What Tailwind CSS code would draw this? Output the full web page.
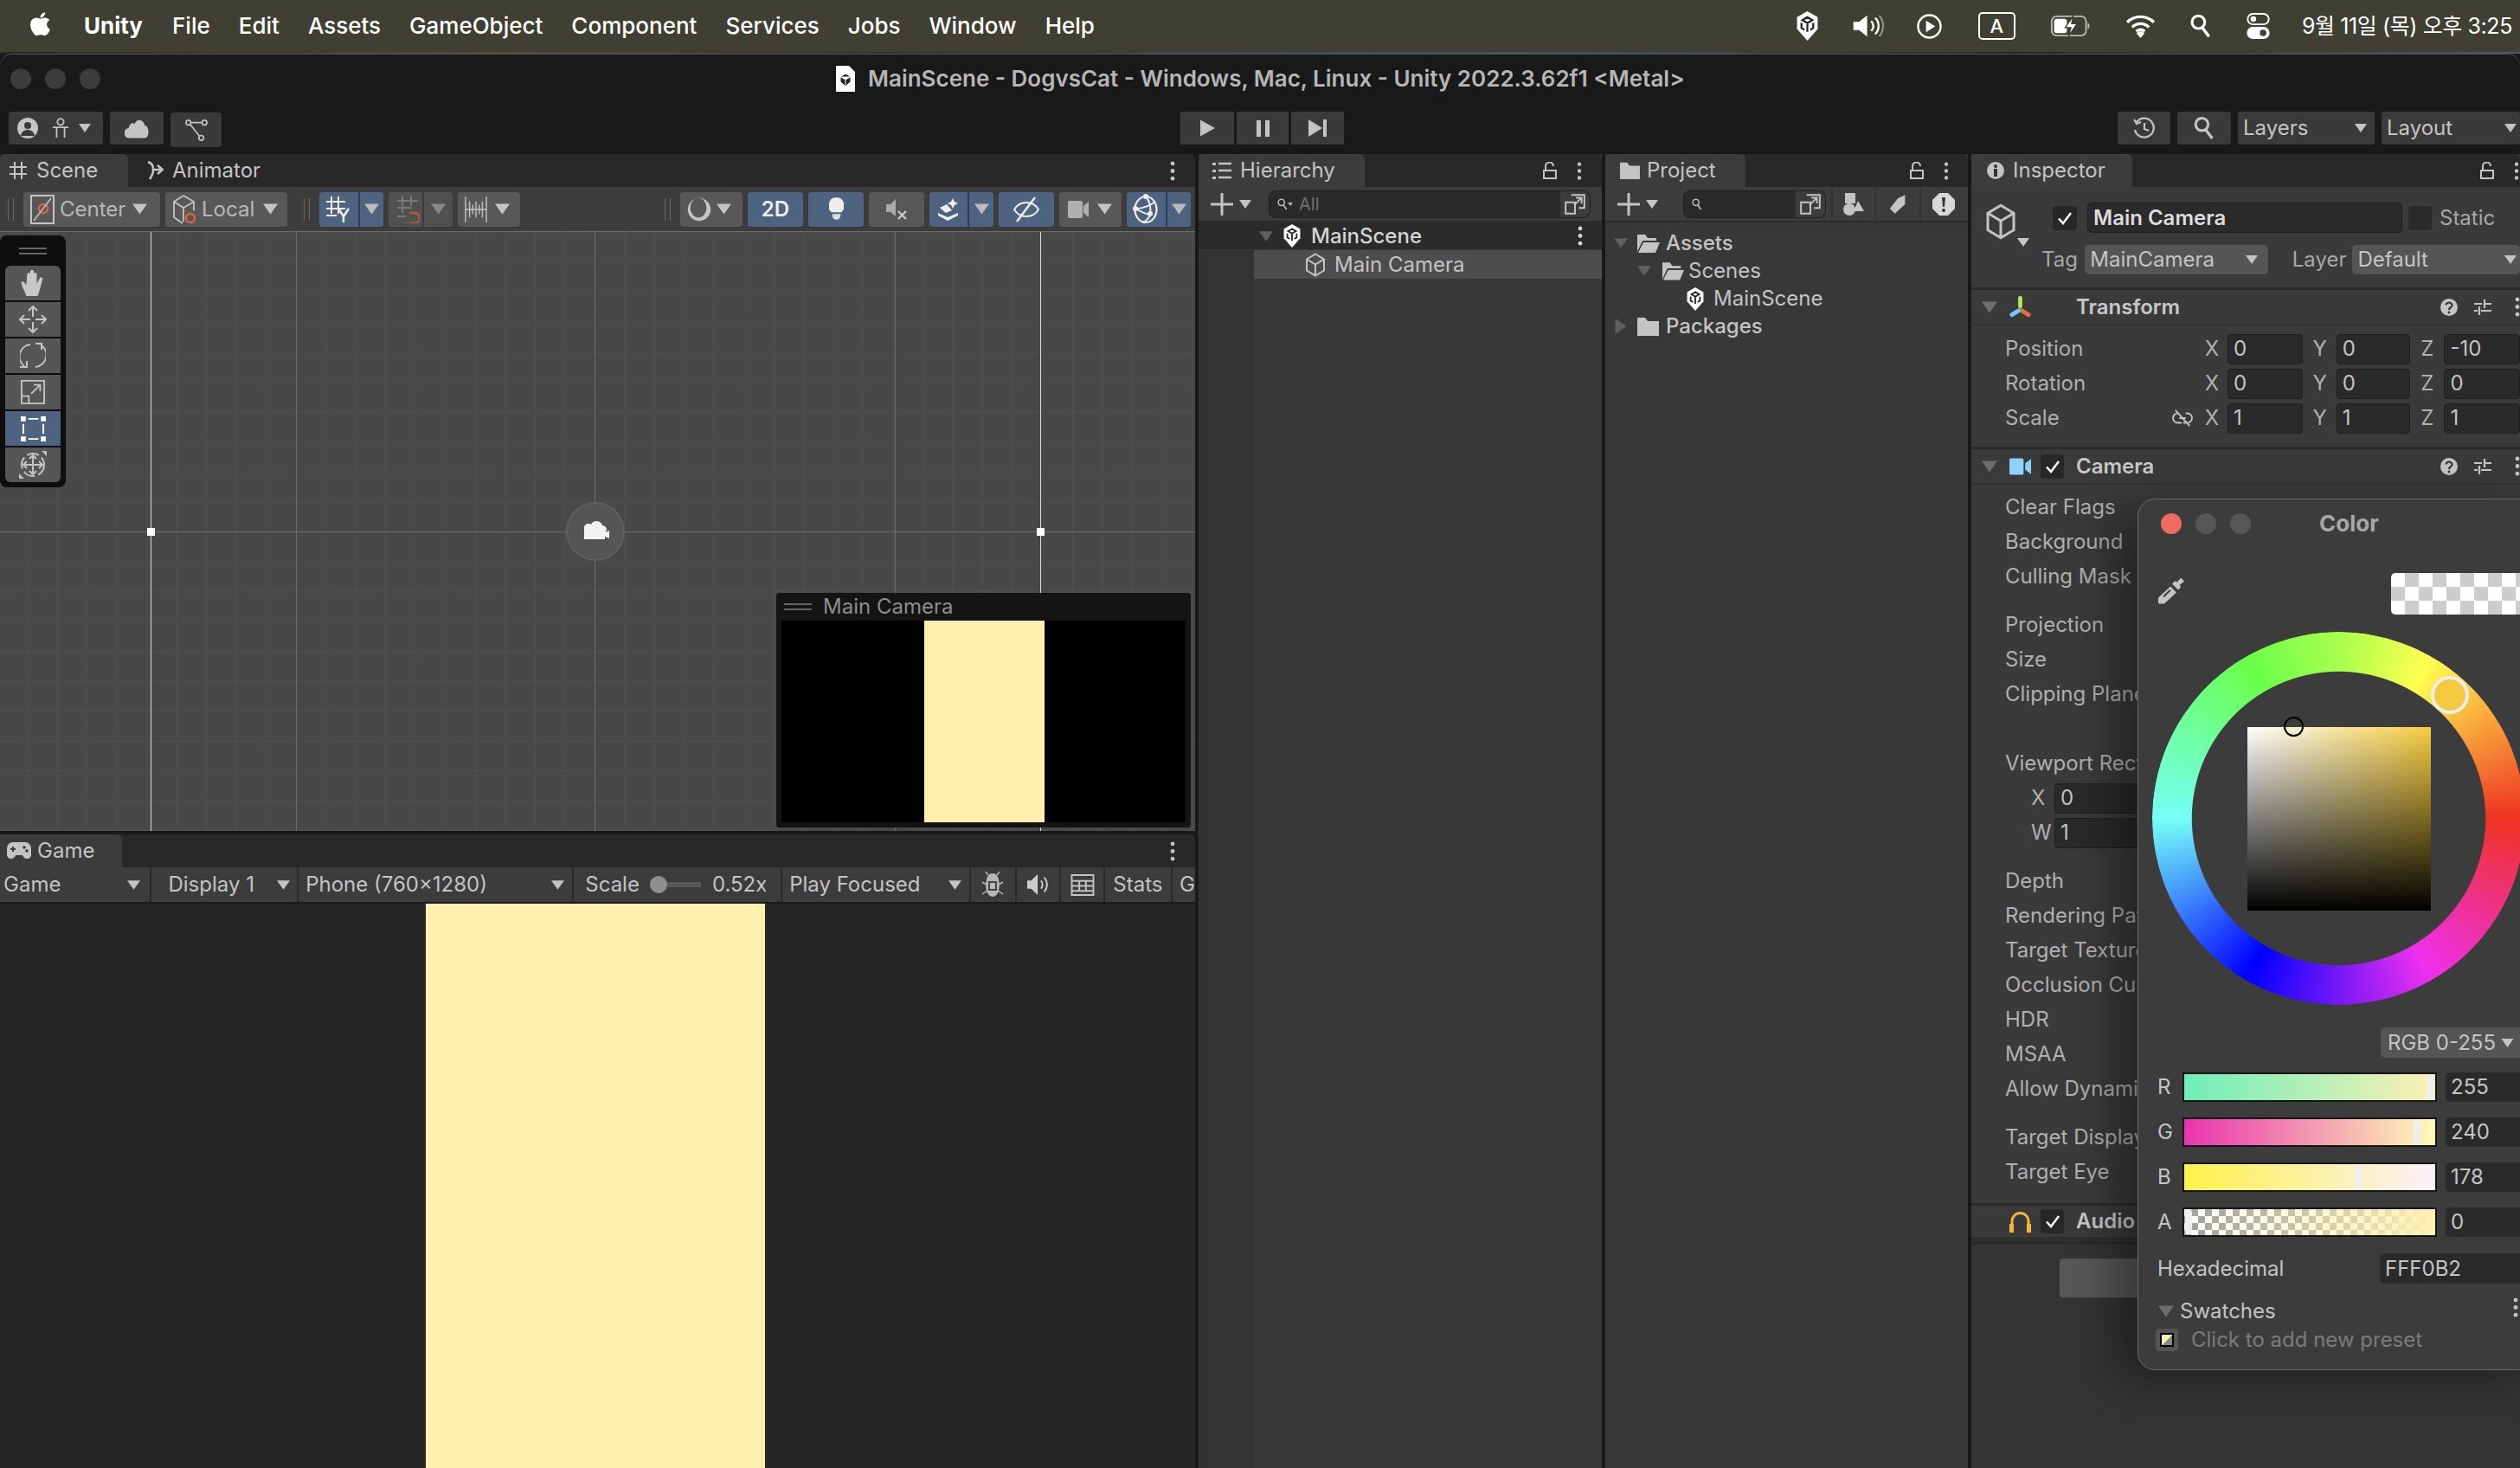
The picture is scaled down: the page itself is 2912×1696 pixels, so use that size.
<!DOCTYPE html>
<html lang="en">
<head>
  <meta charset="UTF-8" />
  <title>Unity</title>
  <script src="https://cdn.jsdelivr.net/npm/@tailwindcss/browser@4"></script>
</head>
<body class="relative w-[2912px] h-[1696px] overflow-hidden bg-[#191919] text-[#c4c4c4] text-[24px] leading-none [font-family:Inter,'Noto_Sans_CJK_KR',sans-serif]">
  <svg class="hidden">
    <symbol id="tri" viewBox="0 0 14 10"><path d="M0 0h14L7 10z" fill="currentColor"/></symbol>
    <symbol id="tri-r" viewBox="0 0 10 14"><path d="M0 0v14l10-7z" fill="currentColor"/></symbol>
    <symbol id="unity" viewBox="0 0 24 30"><path d="M12 0l10.500 6v12l-10.500 12L1.500 18V6z" fill="currentColor"/><path d="M12 6l-5 3 5 3 5-3zM12 12v9M6 12v5l3 2M18 12v5l-3 2" fill="none" stroke="#222" stroke-width="2"/></symbol>
    <symbol id="cube" viewBox="0 0 24 28"><path d="M12 1.500l10 6v13l-10 6-10-6v-13zM2 7.500l10 6 10-6M12 13.500v13" fill="none" stroke="currentColor" stroke-width="2"/></symbol>
    <symbol id="lock" viewBox="0 0 16 20"><path d="M1 10h14v9H1zM3 10V5a4.500 4.500 0 0 1 9 0" fill="none" stroke="currentColor" stroke-width="2"/></symbol>
    <symbol id="dots" viewBox="0 0 6 24"><circle cx="3" cy="3" r="2.500" fill="currentColor"/><circle cx="3" cy="12" r="2.500" fill="currentColor"/><circle cx="3" cy="21" r="2.500" fill="currentColor"/></symbol>
    <symbol id="popout" viewBox="0 0 24 24"><path d="M8 2h14v14h-6M2 10h10v12H2zM11 13l8-8M13 5h6v6" fill="none" stroke="currentColor" stroke-width="1.800"/></symbol>
    <symbol id="check" viewBox="0 0 18 16"><path d="M2 8.500l5 5.500L16 2" fill="none" stroke="#fff" stroke-width="2.500"/></symbol>
    <symbol id="help" viewBox="0 0 20 20"><circle cx="10" cy="10" r="10" fill="#c4c4c4"/><path d="M6.500 7.500a3.500 3 0 1 1 5.500 2.500c-1.500 1-2 1.500-2 3" fill="none" stroke="#333" stroke-width="2.200"/><circle cx="10" cy="16" r="1.400" fill="#333"/></symbol>
    <symbol id="sliders" viewBox="0 0 20 20"><path d="M0 6h9M13 6h7M0 14h4M8 14h12M12 1v10M6 9v10" fill="none" stroke="#c4c4c4" stroke-width="2.200"/></symbol>
    <symbol id="folder" viewBox="0 0 27 24"><path d="M1 2h9l3 4h13v17H1z" fill="currentColor"/></symbol>
    <symbol id="folder-open" viewBox="0 0 27 24"><path d="M1 22V2h9l3 4h10v3H7L1 22zM8 11h19l-5 12H2z" fill="currentColor"/></symbol>
    <symbol id="search" viewBox="0 0 14 16"><circle cx="5.500" cy="5.500" r="4.200" fill="none" stroke="currentColor" stroke-width="1.800"/><path d="M8 9l4.500 6" stroke="currentColor" stroke-width="2"/></symbol>
  </svg>

  <!-- mac menu bar -->
  <header class="h-[60px] bg-[#3f3f33] flex items-center text-white text-[26px] font-medium">
    <svg viewBox="3 3 18 18.500" class="ml-[33px] w-[27px] h-[32px] -mt-[4px] fill-white"><path d="M17.050 20.280c-.98.95-2.050.8-3.080.35-1.090-.46-2.090-.48-3.240 0-1.440.62-2.200.44-3.060-.35C2.790 15.250 3.510 7.590 9.050 7.310c1.350.07 2.290.74 3.080.8 1.180-.24 2.310-.93 3.570-.84 1.510.12 2.650.72 3.400 1.800-3.120 1.870-2.380 5.980.48 7.130-.57 1.500-1.310 2.990-2.540 4.090zM12.030 7.250c-.15-2.230 1.660-4.070 3.740-4.250.29 2.580-2.340 4.500-3.740 4.250z"/></svg>
    <span class="ml-[37px] font-bold">Unity</span>
    <nav class="ml-[34px] flex gap-[33px]">
      <span>File</span><span>Edit</span><span>Assets</span><span>GameObject</span><span>Component</span><span>Services</span><span>Jobs</span><span>Window</span><span>Help</span>
    </nav>
    <div class="ml-auto flex items-center">
      <svg class="w-[31px] h-[34px] text-white"><use href="#unity"/></svg>
      <svg viewBox="0 0 40 30" class="ml-[35px] w-[39px] h-[28px]"><path d="M2 10h7l10-8v26L9 20H2z" fill="#fff"/><path d="M24 9a8 8 0 0 1 0 12M29 5a14 14 0 0 1 0 20" fill="none" stroke="#fff" stroke-width="2.500"/><path d="M34 2a20 20 0 0 1 0 26" fill="none" stroke="#999" stroke-width="2"/></svg>
      <svg viewBox="0 0 30 30" class="ml-[37px] w-[29px] h-[29px]"><circle cx="15" cy="15" r="13.500" fill="none" stroke="#fff" stroke-width="2.500"/><path d="M11 8l11 7-11 7z" fill="#fff"/></svg>
      <div class="ml-[42px] w-[43px] h-[32px] rounded-[5px] border-2 border-white flex items-center justify-center text-[22px]">A</div>
      <svg viewBox="0 0 50 26" class="ml-[39px] w-[50px] h-[24px]"><rect x="1" y="1" width="43" height="24" rx="6" fill="none" stroke="#bbb" stroke-width="2"/><rect x="4" y="4" width="16" height="18" rx="3" fill="#fff"/><path d="M46 9c3 1 3 7 0 8z" fill="#bbb"/><path d="M28 0l-10 15h7l-3 11 11-16h-7z" fill="#fff" stroke="#3f3f33" stroke-width="1.500"/></svg>
      <svg viewBox="0 0 36 28" class="ml-[38px] w-[35px] h-[27px]"><path d="M2 9a23 23 0 0 1 32 0M8 15a14 14 0 0 1 20 0M13 20a7 7 0 0 1 10 0" fill="none" stroke="#fff" stroke-width="3.500"/><path d="M18 28l-5-6a7 7 0 0 1 10 0z" fill="#fff"/></svg>
      <svg class="ml-[39px] w-[26px] h-[28px] text-white"><use href="#search"/></svg>
      <svg viewBox="0 0 28 32" class="ml-[40px] w-[27px] h-[30px]"><rect x="1" y="1" width="26" height="13" rx="6.500" fill="none" stroke="#fff" stroke-width="2"/><circle cx="8" cy="7.500" r="3.500" fill="#fff"/><rect x="0" y="17" width="28" height="15" rx="7.500" fill="#fff"/><circle cx="20" cy="24.500" r="4" fill="#3f3f33"/></svg>
      <span class="ml-[37px] mr-[9px] text-[25px] font-normal whitespace-nowrap tracking-[-0.4px]">9월 11일 (목) 오후 3:25</span>
    </div>
  </header>
  <div class="h-[2px] bg-[linear-gradient(90deg,#2a2a22,#5a4a30_20%,#333_35%,#3e5a66_60%,#2a2a22_80%,#556)]"></div>

  <!-- window chrome -->
  <section class="h-[116px] border-t border-[#555] rounded-t-[14px]">
    <div class="h-[55px] flex items-center pl-[12px]">
      <div class="w-[954px] flex gap-[16px]">
        <span class="w-[24px] h-[24px] rounded-full bg-[#3c3c3c]"></span><span class="w-[24px] h-[24px] rounded-full bg-[#3c3c3c]"></span><span class="w-[24px] h-[24px] rounded-full bg-[#3c3c3c]"></span>
      </div>
      <svg viewBox="0 0 22 30" class="w-[22px] h-[30px]"><path d="M0 0h15l7 7v23H0z" fill="#fff"/><path d="M11 9l6 3.500v6L11 24l-6-5.500v-6zM5 12.500l6 3.500 6-3.500M11 16v8" fill="#222" stroke="#fff" stroke-width="1"/></svg>
      <span class="ml-[15px] text-[26px] font-semibold text-[#b6b6b6] whitespace-nowrap">MainScene - DogvsCat - Windows, Mac, Linux - Unity 2022.3.62f1 &lt;Metal&gt;</span>
    </div>
    <div class="mt-[11px] flex items-start pl-[10px]">
      <div class="w-[1362px] flex gap-[8px]">
        <div class="w-[109px] h-[38px] bg-[#3a3a3a] rounded-[3px] flex items-center pl-[10px]">
          <svg viewBox="0 0 24 24" class="w-[24px] h-[24px]"><circle cx="12" cy="12" r="12" fill="#c4c4c4"/><circle cx="12" cy="9" r="4" fill="#3a3a3a"/><path d="M4 21a8 7 0 0 1 16 0z" fill="#3a3a3a"/></svg>
          <svg viewBox="0 0 22 26" class="ml-[16px] w-[20px] h-[24px]"><circle cx="11" cy="5" r="4" fill="none" stroke="#c4c4c4" stroke-width="2"/><path d="M1 12h20M6 12v13M16 12v13" stroke="#c4c4c4" stroke-width="2"/></svg>
          <svg class="ml-[11px] w-[14px] h-[10px]"><use href="#tri"/></svg>
        </div>
        <div class="w-[62px] h-[38px] bg-[#3a3a3a] rounded-[3px] flex items-center justify-center">
          <svg viewBox="0 0 30 24" class="w-[29px] h-[24px]"><path d="M6 24a6 6 0 0 1-1-12C6 6 10 5 12 7c2-7 11-6 12 2 6 0 6 15 0 15z" fill="#c4c4c4"/></svg>
        </div>
        <div class="w-[59px] h-[40px] mt-[1px] bg-[#3a3a3a] rounded-[3px] flex items-center justify-center">
          <svg viewBox="0 0 28 28" class="w-[28px] h-[26px]"><g fill="none" stroke="#c4c4c4" stroke-width="1.800"><circle cx="4" cy="5" r="3"/><circle cx="24" cy="5" r="3"/><circle cx="20" cy="24" r="3"/><path d="M7 5h14M6 7l12 15"/></g></svg>
        </div>
      </div>
      <div class="flex gap-[3px]">
        <div class="w-[62px] h-[38px] bg-[#3a3a3a] flex items-center justify-center"><svg viewBox="0 0 18 20" class="w-[17px] h-[20px]"><path d="M0 0l18 10L0 20z" fill="#c4c4c4"/></svg></div>
        <div class="w-[60px] h-[38px] bg-[#3a3a3a] flex items-center justify-center"><div class="w-[15px] h-[19px] border-x-[5px] border-[#c4c4c4]"></div></div>
        <div class="w-[61px] h-[38px] bg-[#3a3a3a] flex items-center justify-center"><svg viewBox="0 0 22 20" class="w-[22px] h-[20px]"><path d="M0 0l16 10L0 20zM17 0h4v20h-4z" fill="#c4c4c4"/></svg></div>
      </div>
      <div class="ml-[894px] flex gap-[8px]">
        <div class="w-[61px] h-[38px] bg-[#3a3a3a] rounded-[3px] flex items-center justify-center"><svg viewBox="0 0 26 26" class="w-[26px] h-[26px]"><path d="M4 6a11 11 0 1 1-2 9M1 3l3 5 5-2M13 7v7l5 2" fill="none" stroke="#c4c4c4" stroke-width="2.200"/></svg></div>
        <div class="w-[62px] h-[38px] bg-[#3a3a3a] rounded-[3px] flex items-center justify-center"><svg class="w-[24px] h-[28px] text-[#c4c4c4]"><use href="#search"/></svg></div>
        <div class="w-[158px] h-[38px] bg-[#3a3a3a] rounded-[3px] flex items-center justify-between pl-[6px] pr-[9px]"><span>Layers</span><svg class="w-[14px] h-[10px]"><use href="#tri"/></svg></div>
        <div class="w-[160px] h-[38px] bg-[#3a3a3a] rounded-[3px] flex items-center justify-between pl-[6px] pr-[4px]"><span>Layout</span><svg class="w-[14px] h-[10px]"><use href="#tri"/></svg></div>
      </div>
    </div>
  </section>

  <main class="h-[1518px] flex gap-[4px]">
    <!-- scene + game -->
    <div class="w-[1381px] flex flex-col gap-[4px] shrink-0">
      <section class="h-[782px] flex flex-col">
        <div class="h-[38px] bg-[#282828] flex rounded-tr-[6px]">
          <div class="w-[148px] bg-[#3c3c3c] rounded-t-[6px] flex items-center pl-[11px]">
            <svg viewBox="0 0 20 20" class="w-[20px] h-[22px]"><path d="M6 0v20M14 0v20M0 6h20M0 14h20" stroke="#c4c4c4" stroke-width="2"/></svg>
            <span class="ml-[11px]">Scene</span>
          </div>
          <div class="flex items-center pl-[21px]">
            <svg viewBox="0 0 20 22" class="w-[20px] h-[24px]"><path d="M2 1c6 2 6 6 6 10s-2 7-4 10M7 10h11M13 5l6 5-6 5" fill="none" stroke="#c4c4c4" stroke-width="2.500"/></svg>
            <span class="ml-[10px]">Animator</span>
          </div>
          <svg class="ml-auto mr-[23px] mt-[8px] w-[6px] h-[23px]"><use href="#dots"/></svg>
        </div>
        <div class="h-[52px] bg-[#3c3c3c] border-b border-[#6a6a6a] flex items-center gap-[6px] pl-[9px] shrink-0">
          <div class="w-[7px] h-[26px] border-x border-[#6a6a6a] mr-[5px]"></div>
          <div class="w-[158px] h-[40px] bg-[#585858] rounded-[4px] flex items-center pl-[8px]">
            <svg viewBox="0 0 28 34" class="w-[28px] h-[34px]"><rect x="1" y="1" width="26" height="32" fill="none" stroke="#c4c4c4" stroke-width="2"/><circle cx="15" cy="16" r="5" fill="none" stroke="#d8663c" stroke-width="2.500"/><path d="M4 30L24 4" stroke="#c4c4c4" stroke-width="1.500"/></svg>
            <span class="ml-[6px] text-[#b8b8b8]">Center</span><svg class="ml-[8px] w-[17px] h-[13px]"><use href="#tri"/></svg>
          </div>
          <div class="w-[141px] h-[40px] bg-[#585858] rounded-[4px] flex items-center pl-[8px]">
            <svg viewBox="0 0 28 34" class="w-[28px] h-[34px]"><path d="M13 1l12 7v10M13 1L2 8v18l10 7M2 8l11 7 12-7M13 15v16" fill="none" stroke="#c4c4c4" stroke-width="1.800"/><circle cx="21" cy="27" r="5" fill="none" stroke="#d8663c" stroke-width="2.500"/></svg>
            <span class="ml-[6px] text-[#b8b8b8]">Local</span><svg class="ml-[10px] w-[17px] h-[13px]"><use href="#tri"/></svg>
          </div>
          <div class="ml-[13px] w-[7px] h-[26px] border-x border-[#6a6a6a] mr-[5px]"></div>
          <div class="w-[74px] h-[40px] bg-[#4d6380] rounded-[4px] flex items-center">
            <svg viewBox="0 0 28 30" class="ml-[8px] w-[28px] h-[32px]"><path d="M6 0v20M14 0v20M0 6h22M0 14h22M0 22h12" stroke="#eee" stroke-width="2"/><path d="M14 14l6 9 6-9M20 23v7" fill="none" stroke="#eee" stroke-width="2.500"/></svg>
            <div class="ml-[9px] h-full border-l-2 border-[#2d3e55] flex-1 flex items-center justify-center"><svg class="w-[17px] h-[13px] text-[#bbb]"><use href="#tri"/></svg></div>
          </div>
          <div class="w-[74px] h-[40px] bg-[#505050] rounded-[4px] flex items-center">
            <svg viewBox="0 0 28 32" class="ml-[8px] w-[28px] h-[32px]"><path d="M8 0v20M18 0v12M2 6h24M2 14h16M2 24h10" stroke="#777" stroke-width="2"/><path d="M16 20h6a6 6 0 0 1 0 12h-6" fill="none" stroke="#a85a3c" stroke-width="3"/></svg>
            <div class="ml-[3px] h-full border-l-2 border-[#3c3c3c] flex-1 flex items-center justify-center"><svg class="w-[17px] h-[13px] text-[#888]"><use href="#tri"/></svg></div>
          </div>
          <div class="w-[72px] h-[40px] bg-[#585858] rounded-[4px] flex items-center pl-[8px]">
            <svg viewBox="0 0 28 32" class="w-[26px] h-[32px]"><path d="M1 0v32M27 0v32M1 16h26M6 6v20M10 10v12M14 6v20M18 10v12M22 6v20" stroke="#c4c4c4" stroke-width="1.500"/></svg>
            <svg class="ml-[9px] w-[17px] h-[13px]"><use href="#tri"/></svg>
          </div>
          <div class="ml-[161px] w-[7px] h-[26px] border-x border-[#6a6a6a] mr-[5px]"></div>
          <div class="w-[72px] h-[40px] bg-[#585858] rounded-[4px] flex items-center pl-[8px]">
            <svg viewBox="0 0 28 34" class="w-[28px] h-[32px]"><circle cx="14" cy="17" r="14" fill="#c4c4c4"/><ellipse cx="13" cy="15" rx="10" ry="12" fill="#585858"/></svg>
            <svg class="ml-[6px] w-[17px] h-[13px]"><use href="#tri"/></svg>
          </div>
          <div class="w-[64px] h-[40px] bg-[#4d6380] rounded-[4px] flex items-center justify-center text-[#eee] font-semibold">2D</div>
          <div class="w-[64px] h-[40px] bg-[#4d6380] rounded-[4px] flex items-center justify-center">
            <svg viewBox="0 0 18 28" class="w-[17px] h-[27px]"><path d="M9 0a9 10 0 0 1 6 18H3A9 10 0 0 1 9 0z" fill="#eee"/><path d="M4 20h10v2a5 5 0 0 1-10 0z" fill="#ddd"/></svg>
          </div>
          <div class="w-[64px] h-[40px] bg-[#585858] rounded-[4px] flex items-center justify-center">
            <svg viewBox="0 0 24 24" class="w-[24px] h-[24px]"><path d="M0 6h5l6-6v20l-6-5H0z" fill="#aaa"/><path d="M14 14l9 9M23 14l-9 9" stroke="#ccc" stroke-width="2.200"/></svg>
          </div>
          <div class="w-[74px] h-[40px] bg-[#4d6380] rounded-[4px] flex items-center">
            <svg viewBox="0 0 24 26" class="ml-[10px] w-[24px] h-[26px]"><path d="M17 0l2 4 4 2-4 2-2 4-2-4-4-2 4-2zM2 11l8-4 6 7-7 3z" fill="#eee"/><path d="M0 17l11 5 12-5v3l-12 6L0 20z" fill="#eee"/></svg>
            <div class="ml-[10px] h-full border-l-2 border-[#2d3e55] flex-1 flex items-center justify-center"><svg class="w-[17px] h-[13px] text-[#bbb]"><use href="#tri"/></svg></div>
          </div>
          <div class="w-[64px] h-[40px] bg-[#4d6380] rounded-[4px] flex items-center justify-center">
            <svg viewBox="0 0 30 30" class="w-[30px] h-[30px]"><path d="M1 15C6 7 13 7 15 7c6 0 11 3 14 8-4 7-9 8-14 8-6 0-11-3-14-8z" fill="none" stroke="#eee" stroke-width="2"/><path d="M25 1L4 29" stroke="#eee" stroke-width="2.500"/></svg>
          </div>
          <div class="w-[72px] h-[40px] bg-[#585858] rounded-[4px] flex items-center pl-[10px]">
            <svg viewBox="0 0 24 20" class="w-[24px] h-[20px]"><rect width="17" height="20" rx="2" fill="#b0b0b0"/><path d="M18 6l6-5v18l-6-5z" fill="#b0b0b0"/></svg>
            <svg class="ml-[10px] w-[17px] h-[13px]"><use href="#tri"/></svg>
          </div>
          <div class="w-[74px] h-[40px] bg-[#4d6380] rounded-[4px] flex items-center">
            <svg viewBox="0 0 30 36" class="ml-[7px] w-[30px] h-[36px]"><ellipse cx="15" cy="18" rx="12.500" ry="15" fill="none" stroke="#eee" stroke-width="2.200"/><path d="M3 17c8 0 14-2 22-7M15 3c5 6 6 14 5 21-1 4-5 8-9 9M20 24c-6-1-10-3-17-7" fill="none" stroke="#eee" stroke-width="2"/><circle cx="15" cy="3" r="3" fill="#eee"/><circle cx="3" cy="17" r="3" fill="#eee"/><circle cx="20" cy="23" r="3" fill="#eee"/></svg>
            <div class="ml-[8px] h-full border-l-2 border-[#2d3e55] flex-1 flex items-center justify-center"><svg class="w-[17px] h-[13px] text-[#bbb]"><use href="#tri"/></svg></div>
          </div>
        </div>
        <!-- scene canvas -->
        <div class="relative flex-1 bg-[#484848] overflow-hidden">
          <svg class="absolute inset-0 w-full h-full" width="1381" height="692">
            <defs><pattern id="grid" width="34.500" height="34.500" patternUnits="userSpaceOnUse" x="-3" y="1"><path d="M34.500 0H0V34.500" fill="none" stroke="#535353" stroke-width="1"/></pattern></defs>
            <rect width="1381" height="692" fill="url(#grid)"/>
            <path d="M342.500 0V692M687.500 0V692M1034.500 0V692" stroke="#6e6e6e"/>
            <path d="M0 346.500H1381" stroke="#6e6e6e"/>
            <path d="M174.500 0V692M1202.500 0V692" stroke="#dcdcdc"/>
            <rect x="170" y="342" width="9" height="9" fill="#fff"/>
            <rect x="1198" y="342" width="9" height="9" fill="#fff"/>
            <circle cx="688" cy="346" r="33" fill="#555" stroke="#5f5f5f" stroke-width="2"/>
            <path d="M675 341a5 5 0 0 1 8-3 7 7 0 0 1 13 1 5 5 0 0 1 4 8l4-2v9l-5-2v3h-24z" fill="#f2f2f2"/>
          </svg>
          <!-- tools overlay -->
          <div class="absolute left-0 top-[4px] w-[76px] h-[291px] bg-[#0e0e0e] rounded-[8px] flex flex-col items-center">
            <div class="h-[35px] w-full flex flex-col items-center justify-center gap-[4px]"><span class="block w-[32px] h-[2px] bg-[#666]"></span><span class="block w-[32px] h-[2px] bg-[#666]"></span></div>
            <div class="w-[64px] flex flex-col gap-[2px]">
              <div class="h-[40px] bg-[#565656] rounded-t-[6px] flex items-center justify-center"><svg viewBox="0 0 28 30" class="w-[29px] h-[30px]"><path d="M6 30C4 24 0 18 0 14l2-1 4 4 1-13 2-1 1 1 1-4h3l1 4 1-1 2 1v12l4-8 2 1 1 1-4 14-2 6z" fill="#c8c8c8"/></svg></div>
              <div class="h-[40px] bg-[#565656] flex items-center justify-center"><svg viewBox="0 0 32 32" class="w-[32px] h-[32px]"><path d="M16 1v12M16 19v12M1 16h12M19 16h12M11 6l5-5 5 5M11 26l5 5 5-5M6 11l-5 5 5 5M26 11l5 5-5 5" fill="none" stroke="#c4c4c4" stroke-width="2"/></svg></div>
              <div class="h-[40px] bg-[#565656] flex items-center justify-center"><svg viewBox="0 0 30 30" class="w-[30px] h-[30px]"><path d="M12 2A14 14 0 0 0 5 27M18 28A14 14 0 0 0 25 3M18 1h7v7M0 28h8v-7" fill="none" stroke="#c4c4c4" stroke-width="2"/></svg></div>
              <div class="h-[40px] bg-[#565656] flex items-center justify-center"><svg viewBox="0 0 30 30" class="w-[28px] h-[28px]"><path d="M1 1h28v28H1zM1 20h9v9M13 17L24 6M16 6h8v8" fill="none" stroke="#c4c4c4" stroke-width="2"/></svg></div>
              <div class="h-[40px] bg-[#4d6380] flex items-center justify-center"><svg viewBox="0 0 30 30" class="w-[29px] h-[29px]"><path d="M9 3h12M9 27h12M3 9v12M27 9v12" stroke="#fff" stroke-width="2"/><path d="M0 0h6v6H0zM24 0h6v6h-6zM0 24h6v6H0zM24 24h6v6h-6z" fill="#fff"/></svg></div>
              <div class="h-[40px] bg-[#565656] rounded-b-[6px] flex items-center justify-center"><svg viewBox="0 0 32 32" class="w-[32px] h-[32px]"><path d="M26 0h6v6zM0 32v-6l6 6z" fill="#c4c4c4"/><circle cx="16" cy="16" r="13" fill="none" stroke="#c4c4c4" stroke-width="2" stroke-dasharray="14 4"/><path d="M16 5v22M5 16h22M12 9l4-4 4 4M12 23l4 4 4-4M9 12l-4 4 4 4M23 12l4 4-4 4" fill="none" stroke="#c4c4c4" stroke-width="2"/></svg></div>
            </div>
          </div>
          <!-- camera preview overlay -->
          <div class="absolute left-[897px] top-[417px] w-[479px] h-[271px] bg-[#141414] rounded-[4px] flex flex-col">
            <div class="h-[32px] flex items-center pl-[9px] text-[#8e8e8e]">
              <div class="w-[32px] flex flex-col gap-[4px]"><span class="block h-[2px] bg-[#666]"></span><span class="block h-[2px] bg-[#666]"></span></div>
              <span class="ml-[13px]">Main Camera</span>
            </div>
            <div class="mx-[6px] h-[233px] bg-black flex justify-center pl-[1px]"><div class="ml-[1px] w-[139px] bg-[#fff0b2]"></div></div>
          </div>
        </div>
      </section>

      <section class="flex-1 flex flex-col">
        <div class="h-[38px] bg-[#282828] flex rounded-tr-[6px]">
          <div class="w-[141px] bg-[#3c3c3c] rounded-tr-[6px] flex items-center pl-[8px]">
            <svg viewBox="0 0 28 20" class="w-[28px] h-[20px]"><path d="M7 0h14a7 7 0 0 1 7 7v8a5 5 0 0 1-9 2l-1-2h-8l-1 2a5 5 0 0 1-9-2V7a7 7 0 0 1 7-7z" fill="#c4c4c4"/><path d="M4 8h6M7 5v6" stroke="#3c3c3c" stroke-width="2"/><circle cx="20" cy="6" r="1.800" fill="#3c3c3c"/><circle cx="23" cy="10" r="1.800" fill="#3c3c3c"/></svg>
            <span class="ml-[7px]">Game</span>
          </div>
          <svg class="ml-auto mr-[23px] mt-[8px] w-[6px] h-[23px]"><use href="#dots"/></svg>
        </div>
        <div class="h-[40px] bg-[#3c3c3c] flex items-stretch whitespace-nowrap">
          <div class="w-[177px] border-r-2 border-[#2a2a2a] flex items-center justify-between pl-[4px] pr-[11px]"><span>Game</span><svg class="w-[15px] h-[11px]"><use href="#tri"/></svg></div>
          <div class="w-[171px] border-r-2 border-[#2a2a2a] flex items-center justify-between pl-[19px] pr-[8px]"><span>Display 1</span><svg class="w-[15px] h-[11px]"><use href="#tri"/></svg></div>
          <div class="w-[321px] border-r-2 border-[#2a2a2a] flex items-center justify-between pl-[8px] pr-[9px]"><span>Phone (760x1280)</span><svg class="w-[15px] h-[11px]"><use href="#tri"/></svg></div>
          <div class="w-[243px] border-r-2 border-[#2a2a2a] flex items-center pl-[13px]"><span>Scale</span><span class="ml-[12px] w-[20px] h-[20px] rounded-full bg-[#8f8f8f]"></span><span class="w-[39px] h-[6px] bg-[#5a5a5a]"></span><span class="ml-[13px]">0.52x</span></div>
          <div class="w-[220px] border-r-2 border-[#2a2a2a] flex items-center justify-between pl-[8px] pr-[9px]"><span>Play Focused</span><svg class="w-[15px] h-[11px]"><use href="#tri"/></svg></div>
          <div class="w-[53px] border-r-2 border-[#2a2a2a] flex items-center justify-center"><svg viewBox="0 0 26 30" class="w-[26px] h-[30px]"><path d="M8 4L5 0M18 4l3-4M1 12l5 3M25 12l-5 3M1 26l6-4M25 26l-6-4" stroke="#bbb" stroke-width="1.500"/><path d="M13 2c4 0 6 3 7 7 1 5 1 9 0 13-1 4-4 7-7 7s-6-3-7-7c-1-4-1-8 0-13 1-4 3-7 7-7z" fill="#b8b8b8"/><rect x="9" y="12" width="8" height="9" fill="none" stroke="#444" stroke-width="2"/></svg></div>
          <div class="w-[52px] border-r-2 border-[#2a2a2a] flex items-center justify-center"><svg viewBox="0 0 28 28" class="w-[26px] h-[26px]"><path d="M0 9h5l8-8v26l-8-8H0z" fill="#ccc"/><path d="M17 9a7 7 0 0 1 0 10M21 5a13 13 0 0 1 0 18" fill="none" stroke="#ccc" stroke-width="2"/></svg></div>
          <div class="w-[51px] border-r-2 border-[#2a2a2a] flex items-center justify-center"><svg viewBox="0 0 28 26" class="w-[28px] h-[25px]"><path d="M1 1h26v24H1zM1 8h26M1 14h26M1 20h26M10 8v12M18 8v12" fill="none" stroke="#c4c4c4" stroke-width="2"/></svg></div>
          <div class="w-[79px] border-r-2 border-[#2a2a2a] flex items-center justify-center"><span>Stats</span></div>
          <div class="flex items-center pl-[8px]"><span>G</span></div>
        </div>
        <div class="mt-[2px] flex-1 bg-[#262626] flex pl-[492px]"><div class="w-[392px] bg-[#fff0b2]"></div></div>
      </section>
    </div>

    <!-- hierarchy -->
    <section class="w-[466px] shrink-0 flex flex-col bg-[#383838]">
      <div class="h-[38px] bg-[#282828] flex rounded-t-[6px] items-center">
        <div class="w-[192px] h-full bg-[#3c3c3c] rounded-t-[6px] flex items-center pl-[16px]">
          <svg viewBox="0 0 22 22" class="w-[22px] h-[22px]"><path d="M7 3h15M7 11h15M7 19h15" stroke="#c4c4c4" stroke-width="2.500"/><path d="M0 2h4v3H0zM0 10h4v3H0zM0 18h4v3H0z" fill="#c4c4c4"/></svg>
          <span class="ml-[10px]">Hierarchy</span>
        </div>
        <svg class="ml-[206px] w-[16px] h-[20px]"><use href="#lock"/></svg>
        <svg class="ml-[23px] w-[6px] h-[21px]"><use href="#dots"/></svg>
      </div>
      <div class="h-[41px] bg-[#3c3c3c] border-b-2 border-[#2c2c2c] flex items-center pl-[14px]">
        <svg viewBox="0 0 26 26" class="w-[26px] h-[26px]"><path d="M13 0v26M0 13h26" stroke="#c4c4c4" stroke-width="3"/></svg>
        <svg class="ml-[7px] w-[14px] h-[10px]"><use href="#tri"/></svg>
        <div class="ml-[20px] w-[372px] h-[32px] rounded-[8px] bg-[#2a2a2a] border border-[#1f1f1f] flex items-center pl-[9px]">
          <svg class="w-[12px] h-[14px] text-[#bbb]"><use href="#search"/></svg>
          <svg class="w-[6px] h-[4px] text-[#bbb]"><use href="#tri"/></svg>
          <span class="ml-[7px] text-[20px] text-[#707070]">All</span>
          <div class="ml-auto w-[34px] h-full bg-[#3c3c3c] rounded-r-[8px] flex items-center justify-center"><svg class="w-[26px] h-[26px]"><use href="#popout"/></svg></div>
        </div>
      </div>
      <div class="relative flex-1 flex flex-col">
        <div class="h-[31px] bg-[#2b2b2b] flex items-center pl-[70px] font-medium text-[#d4d4d4]">
          <svg class="w-[16px] h-[18px] text-[#5f5f5f]"><use href="#tri"/></svg>
          <svg class="ml-[9px] w-[26px] h-[27px] text-white"><use href="#unity"/></svg>
          <span class="ml-[9px]">MainScene</span>
          <svg class="ml-auto mr-[22px] w-[6px] h-[23px]"><use href="#dots"/></svg>
        </div>
        <div class="mt-[1px] flex flex-1">
          <div class="w-[64px] bg-[#333333]"></div>
          <div class="flex-1">
            <div class="h-[33px] bg-[#4d4d4d] flex items-center pl-[57px]">
              <svg class="w-[28px] h-[28px] text-[#c4c4c4]"><use href="#cube"/></svg>
              <span class="ml-[8px]">Main Camera</span>
            </div>
          </div>
        </div>
      </div>
    </section>

    <!-- project -->
    <section class="w-[419px] shrink-0 flex flex-col bg-[#383838]">
      <div class="h-[38px] bg-[#282828] flex rounded-t-[6px] items-center">
        <div class="w-[162px] h-full bg-[#3c3c3c] rounded-t-[6px] flex items-center pl-[16px]">
          <svg class="w-[25px] h-[22px] text-[#c4c4c4]"><use href="#folder"/></svg>
          <span class="ml-[7px]">Project</span>
        </div>
        <svg class="ml-[190px] w-[16px] h-[20px]"><use href="#lock"/></svg>
        <svg class="ml-[23px] w-[6px] h-[21px]"><use href="#dots"/></svg>
      </div>
      <div class="h-[41px] bg-[#3c3c3c] border-b-2 border-[#2c2c2c] flex items-center pl-[14px]">
        <svg viewBox="0 0 26 26" class="w-[26px] h-[26px]"><path d="M13 0v26M0 13h26" stroke="#c4c4c4" stroke-width="3"/></svg>
        <svg class="ml-[7px] w-[14px] h-[10px]"><use href="#tri"/></svg>
        <div class="ml-[29px] w-[165px] h-[32px] rounded-[8px] bg-[#2a2a2a] border border-[#1f1f1f] flex items-center pl-[9px]">
          <svg class="w-[12px] h-[14px] text-[#bbb]"><use href="#search"/></svg>
          <div class="ml-auto w-[34px] h-full bg-[#3c3c3c] rounded-r-[8px] flex items-center justify-center"><svg class="w-[26px] h-[26px]"><use href="#popout"/></svg></div>
        </div>
        <div class="ml-[6px] w-[52px] h-full border-x-2 border-[#333] flex items-center justify-center"><svg viewBox="0 0 26 26" class="w-[26px] h-[26px]"><path d="M3 0h12v12H3z" fill="#c4c4c4"/><circle cx="8" cy="19" r="7" fill="#c4c4c4"/><path d="M18 9l7 12H13z" fill="#c4c4c4"/></svg></div>
        <div class="w-[52px] h-full border-r-2 border-[#333] flex items-center justify-center"><svg viewBox="0 0 24 26" class="w-[20px] h-[24px]"><path d="M12 5l10-5v13L8 26 1 19z" fill="#c4c4c4"/></svg></div>
        <div class="w-[52px] flex items-center justify-center"><svg viewBox="0 0 26 26" class="w-[26px] h-[26px]"><path d="M8 0h10l8 8v10l-8 8H8l-8-8V8z" fill="#d8d8d8"/><path d="M11 5h4l-1 11h-2z" fill="#333"/><circle cx="13" cy="20" r="2" fill="#333"/></svg></div>
      </div>
      <div class="pt-[8px] flex flex-col">
        <div class="h-[32px] flex items-center pl-[10px] font-medium">
          <svg class="w-[16px] h-[18px] text-[#5f5f5f]"><use href="#tri"/></svg>
          <svg class="ml-[10px] w-[27px] h-[24px]"><use href="#folder-open"/></svg>
          <span class="ml-[7px]">Assets</span>
        </div>
        <div class="h-[32px] flex items-center pl-[37px]">
          <svg class="w-[16px] h-[18px] text-[#5f5f5f]"><use href="#tri"/></svg>
          <svg class="ml-[12px] w-[26px] h-[24px]"><use href="#folder-open"/></svg>
          <span class="ml-[5px]">Scenes</span>
        </div>
        <div class="h-[32px] flex items-center pl-[92px]">
          <svg class="w-[24px] h-[27px] text-white"><use href="#unity"/></svg>
          <span class="ml-[9px]">MainScene</span>
        </div>
        <div class="h-[32px] flex items-center pl-[10px] font-medium">
          <svg class="w-[16px] h-[18px] text-[#5f5f5f]"><use href="#tri-r"/></svg>
          <svg class="ml-[10px] w-[27px] h-[24px]"><use href="#folder"/></svg>
          <span class="ml-[7px]">Packages</span>
        </div>
      </div>
    </section>

    <!-- inspector -->
    <section class="flex-1 min-w-0 overflow-hidden flex flex-col bg-[#3a3a3a]">
      <div class="h-[38px] bg-[#282828] flex rounded-t-[6px] items-center shrink-0">
        <div class="w-[186px] h-full bg-[#3c3c3c] rounded-t-[6px] flex items-center pl-[18px]">
          <svg viewBox="0 0 20 20" class="w-[20px] h-[24px]"><circle cx="10" cy="10" r="10" fill="#c4c4c4"/><circle cx="10" cy="5" r="2" fill="#333"/><path d="M8 8h4v9H8z" fill="#333"/></svg>
          <span class="ml-[10px]">Inspector</span>
        </div>
        <svg class="ml-[402px] w-[16px] h-[20px]"><use href="#lock"/></svg>
        <svg class="ml-[23px] w-[6px] h-[21px]"><use href="#dots"/></svg>
      </div>
      <!-- object header -->
      <div class="h-[119px] border-b-[3px] border-[#2a2a2a] shrink-0 relative">
        <div class="pt-[18px] flex items-center h-[53px]">
          <svg class="ml-[15px] w-[38px] h-[42px] text-[#c4c4c4] mt-[8px]"><use href="#cube"/></svg>
          <div class="ml-[41px] w-[28px] h-[28px] rounded-[4px] bg-[#272727] flex items-center justify-center"><svg class="w-[18px] h-[16px]"><use href="#check"/></svg></div>
          <div class="ml-[12px] w-[364px] h-[35px] rounded-[5px] bg-[#2a2a2a] border border-[#1e1e1e] flex items-center pl-[6px] font-semibold text-[#dcdcdc]">Main Camera</div>
          <div class="ml-[7px] w-[27px] h-[28px] rounded-[4px] bg-[#2a2a2a]"></div>
          <span class="ml-[9px] text-[#a8a8a8]">Static</span>
        </div>
        <div class="flex items-center h-[34px] mt-[14px] relative">
          <svg class="absolute left-[53px] -top-[8px] w-[14px] h-[10px]"><use href="#tri"/></svg>
          <span class="ml-[81px] w-[52px] text-[#a8a8a8]">Tag</span>
          <div class="w-[218px] h-[34px] rounded-[5px] bg-[#555] flex items-center justify-between pl-[6px] pr-[12px]"><span>MainCamera</span><svg class="w-[14px] h-[10px]"><use href="#tri"/></svg></div>
          <span class="ml-[28px] w-[72px] text-[#a8a8a8]">Layer</span>
          <div class="w-[200px] h-[34px] rounded-[5px] bg-[#555] flex items-center pl-[6px]"><span>Default</span><svg class="ml-[88px] w-[14px] h-[10px]"><use href="#tri"/></svg></div>
        </div>
      </div>
      <!-- transform -->
      <div class="h-[41px] border-b-[2px] border-[#333] flex items-center pl-[12px] shrink-0">
        <svg class="w-[18px] h-[16px] text-[#6e6e6e]"><use href="#tri"/></svg>
        <svg viewBox="0 0 26 26" class="ml-[14px] w-[25px] h-[26px]"><path d="M13 2v10" stroke="#b5e853" stroke-width="5" stroke-linecap="round"/><path d="M15 17l8 5" stroke="#e8703c" stroke-width="5" stroke-linecap="round"/><path d="M11 17l-8 5" stroke="#7dc6f5" stroke-width="5" stroke-linecap="round"/></svg>
        <span class="ml-[52px] font-semibold text-[#c8c8c8]">Transform</span>
        <div class="ml-auto flex items-center">
          <svg class="w-[20px] h-[24px]"><use href="#help"/></svg>
          <svg class="ml-[19px] w-[20px] h-[20px]"><use href="#sliders"/></svg>
          <svg class="ml-[27px] w-[6px] h-[23px]"><use href="#dots"/></svg>
        </div>
      </div>
      <div class="pt-[7px] pb-[15px] h-[143px] border-b-[3px] border-[#2a2a2a] shrink-0">
        <div class="h-[40px] flex items-center text-[#b0b0b0]"><span class="w-[277px] pl-[39px]">Position</span><span class="w-[27px]">X</span><div class="w-[89px] h-[35px] rounded-[4px] bg-[#2a2a2a] border border-[#1e1e1e] flex items-center pl-[6px] text-[#c4c4c4]">0</div><span class="ml-[12px] w-[28px]">Y</span><div class="w-[88px] h-[35px] rounded-[4px] bg-[#2a2a2a] border border-[#1e1e1e] flex items-center pl-[6px] text-[#c4c4c4]">0</div><span class="ml-[12px] w-[28px]">Z</span><div class="w-[90px] h-[35px] rounded-[4px] bg-[#2a2a2a] border border-[#1e1e1e] flex items-center pl-[6px] text-[#c4c4c4]">-10</div></div>
        <div class="h-[40px] flex items-center text-[#b0b0b0]"><span class="w-[277px] pl-[39px]">Rotation</span><span class="w-[27px]">X</span><div class="w-[89px] h-[35px] rounded-[4px] bg-[#2a2a2a] border border-[#1e1e1e] flex items-center pl-[6px] text-[#c4c4c4]">0</div><span class="ml-[12px] w-[28px]">Y</span><div class="w-[88px] h-[35px] rounded-[4px] bg-[#2a2a2a] border border-[#1e1e1e] flex items-center pl-[6px] text-[#c4c4c4]">0</div><span class="ml-[12px] w-[28px]">Z</span><div class="w-[90px] h-[35px] rounded-[4px] bg-[#2a2a2a] border border-[#1e1e1e] flex items-center pl-[6px] text-[#c4c4c4]">0</div></div>
        <div class="h-[40px] flex items-center text-[#b0b0b0]"><div class="w-[277px] pl-[39px] flex items-center"><span class="w-[193px]">Scale</span><svg viewBox="0 0 26 24" class="w-[24px] h-[22px]"><path d="M9 6H7a6 6 0 0 0 0 12h5M17 6h2a6 6 0 0 1 0 12h-5M4 2l18 20M9 12h8" fill="none" stroke="#c4c4c4" stroke-width="2"/></svg></div><span class="w-[27px]">X</span><div class="w-[89px] h-[35px] rounded-[4px] bg-[#2a2a2a] border border-[#1e1e1e] flex items-center pl-[6px] text-[#c4c4c4]">1</div><span class="ml-[12px] w-[28px]">Y</span><div class="w-[88px] h-[35px] rounded-[4px] bg-[#2a2a2a] border border-[#1e1e1e] flex items-center pl-[6px] text-[#c4c4c4]">1</div><span class="ml-[12px] w-[28px]">Z</span><div class="w-[90px] h-[35px] rounded-[4px] bg-[#2a2a2a] border border-[#1e1e1e] flex items-center pl-[6px] text-[#c4c4c4]">1</div></div>
      </div>
      <!-- camera -->
      <div class="h-[41px] border-b-[2px] border-[#333] flex items-center pl-[12px] shrink-0">
        <svg class="w-[18px] h-[16px] text-[#6e6e6e]"><use href="#tri"/></svg>
        <svg viewBox="0 0 26 20" class="ml-[14px] w-[25px] h-[20px]"><rect width="17" height="20" rx="2" fill="#8ed1fc"/><path d="M19 6l7-5v18l-7-5z" fill="#8ed1fc"/></svg>
        <div class="ml-[11px] w-[27px] h-[28px] rounded-[4px] bg-[#272727] flex items-center justify-center"><svg class="w-[18px] h-[16px]"><use href="#check"/></svg></div>
        <span class="ml-[14px] font-semibold text-[#c8c8c8]">Camera</span>
        <div class="ml-auto flex items-center">
          <svg class="w-[20px] h-[24px]"><use href="#help"/></svg>
          <svg class="ml-[19px] w-[20px] h-[20px]"><use href="#sliders"/></svg>
          <svg class="ml-[27px] w-[6px] h-[23px]"><use href="#dots"/></svg>
        </div>
      </div>
      <div class="pt-[6px] h-[833px] border-b-[3px] border-[#2a2a2a] shrink-0 text-[#b0b0b0] whitespace-nowrap">
        <div class="h-[40px] flex items-center pl-[39px]">Clear Flags</div>
        <div class="h-[40px] flex items-center pl-[39px]">Background</div>
        <div class="h-[40px] flex items-center pl-[39px]">Culling Mask</div>
        <div class="mt-[16px] h-[40px] flex items-center pl-[39px]">Projection</div>
        <div class="h-[40px] flex items-center pl-[39px]">Size</div>
        <div class="h-[40px] flex items-center pl-[39px]">Clipping Planes</div>
        <div class="mt-[40px] h-[40px] flex items-center pl-[39px]">Viewport Rect</div>
        <div class="h-[40px] flex items-center pl-[69px]"><span class="w-[27px]">X</span><div class="w-[100px] h-[35px] rounded-[4px] bg-[#2a2a2a] border border-[#1e1e1e] flex items-center pl-[6px] text-[#c4c4c4]">0</div></div>
        <div class="h-[40px] flex items-center pl-[69px]"><span class="w-[27px]">W</span><div class="w-[100px] h-[35px] rounded-[4px] bg-[#2a2a2a] border border-[#1e1e1e] flex items-center pl-[6px] text-[#c4c4c4]">1</div></div>
        <div class="mt-[16px] h-[40px] flex items-center pl-[39px]">Depth</div>
        <div class="h-[40px] flex items-center pl-[39px]">Rendering Path</div>
        <div class="h-[40px] flex items-center pl-[39px]">Target Texture</div>
        <div class="h-[40px] flex items-center pl-[39px]">Occlusion Culling</div>
        <div class="h-[40px] flex items-center pl-[39px]">HDR</div>
        <div class="h-[40px] flex items-center pl-[39px]">MSAA</div>
        <div class="h-[40px] flex items-center pl-[39px]">Allow Dynamic</div>
        <div class="mt-[16px] h-[40px] flex items-center pl-[39px]">Target Display</div>
        <div class="h-[40px] flex items-center pl-[39px]">Target Eye</div>
      </div>
      <div class="h-[42px] flex items-center pl-[44px] shrink-0 border-b-[6px] border-[#2f2f2f]">
        <svg viewBox="0 0 25 28" class="w-[25px] h-[28px]"><path d="M3 24v-10a9.500 9.500 0 0 1 19 0v10" fill="none" stroke="#f2b63c" stroke-width="3"/><rect x="0" y="17" width="5" height="10" fill="#f2b63c"/><rect x="20" y="17" width="5" height="10" fill="#f2b63c"/></svg>
        <div class="ml-[11px] w-[27px] h-[28px] rounded-[4px] bg-[#272727] flex items-center justify-center"><svg class="w-[18px] h-[16px]"><use href="#check"/></svg></div>
        <span class="ml-[14px] font-semibold text-[#c8c8c8] whitespace-nowrap">Audio Listener</span>
      </div>
      <div class="flex-1 bg-[#343434] border-t-[3px] border-[#2a2a2a] pt-[16px] pl-[102px]">
        <div class="w-[300px] h-[45px] rounded-[4px] bg-[#585858]"></div>
      </div>
    </section>
  </main>

  <!-- color picker window -->
  <aside class="absolute left-[2470px] top-[576px] w-[480px] h-[1007px] rounded-l-[20px] bg-[#3c3c3c] border border-[#6a6a6a] shadow-[-30px_10px_50px_rgba(0,0,0,0.35)] overflow-hidden flex flex-col pl-[22px]">
    <div class="h-[56px] flex items-center shrink-0 relative">
      <div class="flex gap-[16px] ml-[4px]"><span class="w-[24px] h-[24px] rounded-full bg-[#ee6a5f]"></span><span class="w-[24px] h-[24px] rounded-full bg-[#575757]"></span><span class="w-[24px] h-[24px] rounded-full bg-[#575757]"></span></div>
      <span class="ml-[79px] text-[26px] font-bold text-[#a8a8a8]">Color</span>
    </div>
    <div class="mt-[29px] h-[48px] flex shrink-0 relative">
      <svg viewBox="0 0 32 32" class="mt-[4px] w-[32px] h-[33px]"><path d="M2 31l-1-1v-6L15 11l7 7-14 13z" fill="#c4c4c4"/><path d="M17 8l3-3 3 1 4-5 4 4-5 4 1 3-3 3z" fill="#c4c4c4"/><path d="M7 23l8-8" stroke="#3c3c3c" stroke-width="2"/></svg>
      <div class="ml-[238px] w-[160px] h-[48px] rounded-l-[5px] bg-[conic-gradient(#cdcdcd_25%,#ffffff_0_50%,#cdcdcd_0_75%,#ffffff_0)] [background-size:32px_32px]"></div>
    </div>
    <div class="mt-[20px] -ml-[6px] relative w-[431px] h-[431px] shrink-0">
      <div class="absolute inset-0 rounded-full bg-[conic-gradient(#a8ff4c,#ffff50_30deg,#ee3322_90deg,#ee30ee_150deg,#0000ff_210deg,#75fff8_270deg,#6aff4a_330deg,#a8ff4c)] [mask-image:radial-gradient(closest-side,transparent_78.5%,black_79%)]"></div>
      <div class="absolute left-[110px] top-[110px] w-[212px] h-[212px] bg-[linear-gradient(to_top,#000,transparent),linear-gradient(to_right,#fff,#f5cc40)]"></div>
      <div class="absolute left-[322px] top-[51px] w-[44px] h-[44px] rounded-full bg-[#f5c93f] border-[4px] border-[#eeeeee]"></div>
      <div class="absolute left-[152px] top-[98px] w-[23px] h-[23px] rounded-full border-2 border-black"></div>
    </div>
    <div class="mt-[26px] ml-[258px] h-[35px] w-[190px] rounded-[5px] bg-[#555] flex items-center pl-[8px] shrink-0"><span>RGB 0-255</span><svg class="ml-[6px] w-[15px] h-[10px]"><use href="#tri"/></svg></div>
    <div class="mt-[17px] flex items-center h-[34px] shrink-0"><span class="w-[29px]">R</span>
      <div class="relative w-[294px] h-full border-[2px] border-[#141414] bg-[linear-gradient(to_right,#6deeb9,#fdf0b4)]"><span class="absolute right-[1px] top-[1px] bottom-[1px] w-[8px] bg-[#eeeeee] rounded-[2px]"></span></div>
      <div class="ml-[10px] w-[110px] h-[34px] rounded-[5px] bg-[#2a2a2a] flex items-center pl-[6px]">255</div></div>
    <div class="mt-[18px] flex items-center h-[34px] shrink-0"><span class="w-[29px]">G</span>
      <div class="relative w-[294px] h-full border-[2px] border-[#141414] bg-[linear-gradient(to_right,#ea33ae,#fdfcb6)]"><span class="absolute left-[265px] top-[1px] bottom-[1px] w-[8px] bg-[#eeeeee] rounded-[2px]"></span></div>
      <div class="ml-[10px] w-[110px] h-[34px] rounded-[5px] bg-[#2a2a2a] flex items-center pl-[6px]">240</div></div>
    <div class="mt-[18px] flex items-center h-[34px] shrink-0"><span class="w-[29px]">B</span>
      <div class="relative w-[294px] h-full border-[2px] border-[#141414] bg-[linear-gradient(to_right,#fef24a,#fbf0fc)]"><span class="absolute left-[197px] top-[1px] bottom-[1px] w-[8px] bg-[#eeeeee] rounded-[2px]"></span></div>
      <div class="ml-[10px] w-[110px] h-[34px] rounded-[5px] bg-[#2a2a2a] flex items-center pl-[6px]">178</div></div>
    <div class="mt-[18px] flex items-center h-[34px] shrink-0"><span class="w-[29px]">A</span>
      <div class="relative w-[294px] h-full border-[2px] border-[#141414] bg-[linear-gradient(to_right,transparent,#fff0b2),conic-gradient(#a0a0a0_25%,#ffffff_0_50%,#a0a0a0_0_75%,#ffffff_0)] [background-size:100%_100%,16px_16px]"><span class="absolute left-[1px] top-[1px] bottom-[1px] w-[8px] bg-[#eeeeee] rounded-[2px]"></span></div>
      <div class="ml-[10px] w-[110px] h-[34px] rounded-[5px] bg-[#2a2a2a] flex items-center pl-[6px]">0</div></div>
    <div class="mt-[19px] flex items-center h-[35px] shrink-0"><span class="w-[257px]">Hexadecimal</span><div class="w-[190px] h-[35px] rounded-[5px] bg-[#2a2a2a] flex items-center pl-[6px]">FFF0B2</div></div>
    <div class="mt-[20px] flex items-center h-[24px] shrink-0">
      <svg class="ml-[1px] w-[18px] h-[16px] text-[#6e6e6e]"><use href="#tri"/></svg>
      <span class="ml-[7px]">Swatches</span>
      <svg class="ml-[274px] -mt-[10px] w-[6px] h-[23px]"><use href="#dots"/></svg>
    </div>
    <div class="mt-[8px] flex items-center h-[26px] shrink-0">
      <div class="-ml-[2px] w-[26px] h-[26px] rounded-[4px] bg-[#555] flex items-center justify-center"><div class="w-[16px] h-[16px] border-2 border-black bg-[linear-gradient(135deg,#fff0b2_50%,#888_50%)]"></div></div>
      <span class="ml-[15px] text-[#7b7b7b]">Click to add new preset</span>
    </div>
  </aside>
</body>
</html>
